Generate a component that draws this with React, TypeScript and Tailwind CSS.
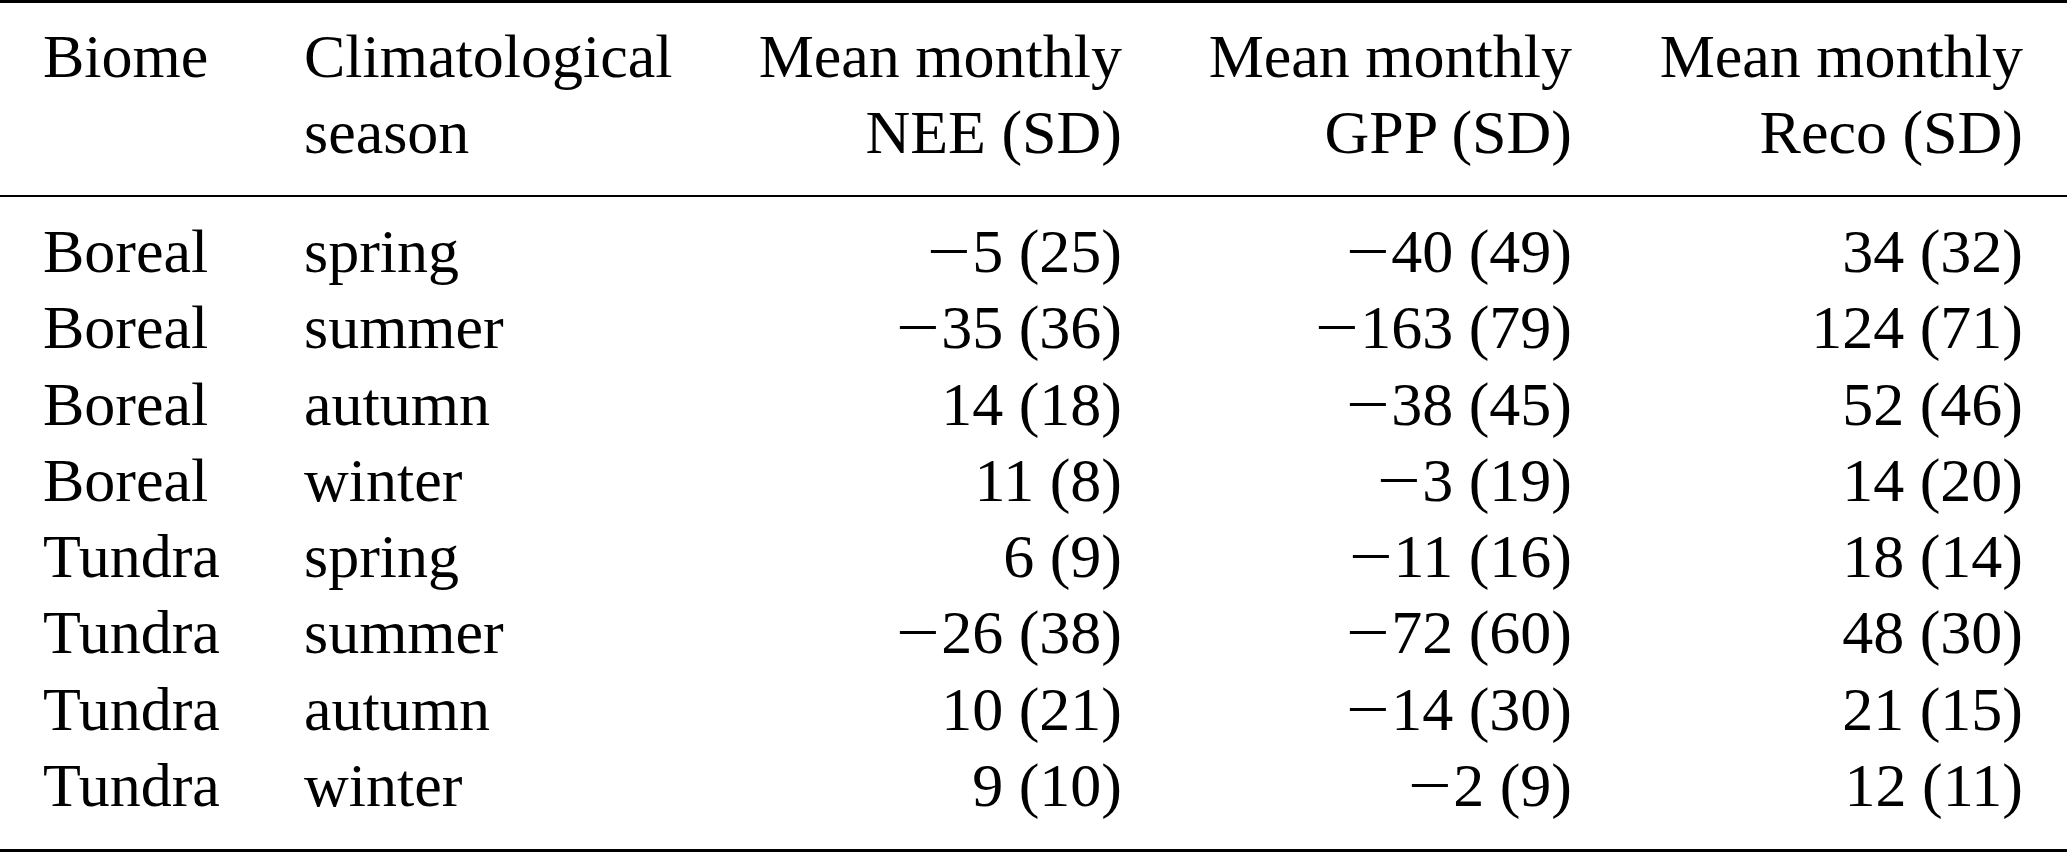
const ROWS: [string, string, string, string, string][] = [
  ["Boreal", "spring", "−5 (25)", "−40 (49)", "34 (32)"],
  ["Boreal", "summer", "−35 (36)", "−163 (79)", "124 (71)"],
  ["Boreal", "autumn", "14 (18)", "−38 (45)", "52 (46)"],
  ["Boreal", "winter", "11 (8)", "−3 (19)", "14 (20)"],
  ["Tundra", "spring", "6 (9)", "−11 (16)", "18 (14)"],
  ["Tundra", "summer", "−26 (38)", "−72 (60)", "48 (30)"],
  ["Tundra", "autumn", "10 (21)", "−14 (30)", "21 (15)"],
  ["Tundra", "winter", "9 (10)", "−2 (9)", "12 (11)"],
];

const GRID =
  "grid grid-cols-[261px_400px_418px_450px_451px] pl-[43px] pr-[44px]";

// LaTeX minus is wider than the font's own minus sign
function Num({ value }: { value: string }) {
  if (!value.startsWith("−")) return <>{value}</>;
  return (
    <>
      <span className="inline-block w-[0.74em] text-center scale-x-[1.25]">
        −
      </span>
      {value.slice(1)}
    </>
  );
}

export default function App() {
  return (
    <div className="w-[2067px] h-[852px] overflow-hidden bg-white text-black font-['Liberation_Serif',_'Times_New_Roman',_serif] text-[62px] leading-[76px]">
      <div className="border-t-[3px] border-black" />
      <div className={`${GRID} pt-[15px] pb-[25px]`}>
        <div>Biome</div>
        <div>
          Climatological
          <br />
          season
        </div>
        <div className="text-right">
          Mean monthly
          <br />
          NEE (SD)
        </div>
        <div className="text-right">
          Mean monthly
          <br />
          GPP (SD)
        </div>
        <div className="text-right">
          Mean monthly
          <br />
          Reco (SD)
        </div>
      </div>
      <div className="border-t-2 border-black" />
      <div className="pt-[16px] pb-[26px] leading-[76.25px]">
        {ROWS.map((r, i) => (
          <div key={i} className={GRID}>
            <div>{r[0]}</div>
            <div>{r[1]}</div>
            <div className="text-right">
              <Num value={r[2]} />
            </div>
            <div className="text-right">
              <Num value={r[3]} />
            </div>
            <div className="text-right">
              <Num value={r[4]} />
            </div>
          </div>
        ))}
      </div>
      <div className="border-t-[3px] border-black" />
    </div>
  );
}
